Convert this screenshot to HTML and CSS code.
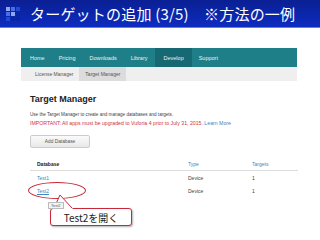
FILE: index.html
```html
<!DOCTYPE html>
<html lang="ja">
<head>
  <meta charset="UTF-8">
  <title>ターゲットの追加</title>
  <link rel="stylesheet" href="styles.css">
</head>
<body>
  <header class="slide-title">
    <div class="grid-icon">
      <span class="c1"></span><span class="c2"></span><span class="c3"></span>
      <span class="c2"></span><span class="c1"></span><span class="c4"></span>
      <span class="c3"></span><span class="c4"></span><span class="c4"></span>
    </div>
    <h1>ターゲットの追加 (3/5)　※方法の一例</h1>
  </header>

  <div class="shot">
    <nav class="topnav">
      <a>Home</a>
      <a>Pricing</a>
      <a>Downloads</a>
      <a>Library</a>
      <a class="active">Develop</a>
      <a>Support</a>
    </nav>
    <nav class="subnav">
      <a>License Manager</a>
      <a class="active">Target Manager</a>
    </nav>

    <div class="content">
      <h2>Target Manager</h2>
      <p class="desc">Use the Target Manager to create and manage databases and targets.</p>
      <p class="warn">IMPORTANT: All apps must be upgraded to Vuforia 4 prior to July 31, 2015. <a>Learn More</a></p>
      <button class="add-db">Add Database</button>

      <div class="table">
        <div class="row head">
          <span class="c-name">Database</span>
          <span class="c-type">Type</span>
          <span class="c-count">Targets</span>
        </div>
        <div class="row">
          <span class="c-name"><a>Test1</a></span>
          <span class="c-type">Device</span>
          <span class="c-count">1</span>
        </div>
        <div class="row">
          <span class="c-name"><a class="underline">Test2</a></span>
          <span class="c-type">Device</span>
          <span class="c-count">1</span>
        </div>
      </div>
    </div>

    <div class="ring"></div>
    <div class="callout">Test2を開く</div>
    <svg class="pointer" width="40" height="20" viewBox="0 0 40 20">
      <polygon points="20,5 14,19 33,19" fill="#fff"/>
      <polyline points="14,18 20,5 32,18" fill="none" stroke="#c8283a" stroke-width="1"/>
    </svg>
    <div class="tip">Test2</div>
  </div>
</body>
</html>
```

FILE: styles.css
```css
* {
  margin: 0;
  padding: 0;
  box-sizing: border-box;
}
body {
  width: 320px;
  height: 240px;
  overflow: hidden;
  background: #fff;
  font-family: 'Liberation Sans', Arial, sans-serif;
  color: #333;
}
.slide-title {
  height: 28px;
  display: flex;
  align-items: center;
  gap: 10px;
  padding-left: 6px;
  background: linear-gradient(to bottom, #0a1f93, #0d2cc0);
  border-bottom: 1px solid #6a7fd6;
}
.grid-icon {
  display: grid;
  grid-template-columns: repeat(3, 4px);
  gap: 1px;
}
.grid-icon span {
  width: 4px;
  height: 4px;
}
.grid-icon .c1 { background: #8fa6f0; }
.grid-icon .c2 { background: #4a6ee8; }
.grid-icon .c3 { background: #2048d8; }
.grid-icon .c4 { background: #0a25a0; }
.slide-title h1 {
  color: #fff;
  font-family: 'Noto Sans CJK JP', sans-serif;
  font-weight: 400;
  font-size: 15px;
  letter-spacing: 0.2px;
}
.shot {
  position: relative;
  height: 211px;
  padding: 20px 23px 0 21px;
  font-size: 5.5px;
}
.topnav {
  display: flex;
  height: 19px;
  align-items: stretch;
  background: #1f7f88;
  padding-left: 2px;
}
.topnav a {
  color: #e8f2f3;
  display: flex;
  align-items: center;
  padding: 0 7px;
}
.topnav a.active {
  background: #166972;
  padding: 0 8px 0 9px;
}
.subnav {
  display: flex;
  height: 14px;
  background: #efefef;
  padding-left: 8px;
  font-size: 5px;
}
.subnav a {
  display: flex;
  align-items: center;
  padding: 0 6px;
  color: #555;
}
.subnav a.active {
  background: #dcdcdc;
}
.content {
  padding: 13px 0 0 9px;
}
h2 {
  font-size: 9px;
  font-weight: 700;
  color: #222;
  margin-bottom: 7px;
}
.desc,
.warn {
  font-size: 4.6px;
  line-height: 8px;
}
.desc {
  color: #444;
}
.warn {
  font-size: 5.2px;
  color: #d2343c;
}
.warn a {
  color: #3a87c4;
}
.add-db {
  margin-top: 8px;
  width: 60px;
  height: 13px;
  font-family: inherit;
  font-size: 4.8px;
  color: #555;
  background: linear-gradient(#fafafa, #e8e8e8);
  border: 1px solid #ccc;
  border-radius: 2px;
}
.table {
  margin-top: 10px;
  width: 268px;
  font-size: 5px;
}
.row {
  display: flex;
  height: 13px;
  align-items: center;
  padding-left: 7px;
}
.row.head {
  border-bottom: 1px solid #ddd;
  font-weight: 700;
  color: #222;
}
.row.head .c-type,
.row.head .c-count {
  color: #3a87c4;
  font-weight: 400;
}
.c-name { width: 151px; }
.c-type { width: 64px; color: #444; }
.c-count { color: #444; }
.c-name a {
  color: #3a87c4;
}
.c-name a.underline {
  text-decoration: underline;
}
.ring {
  position: absolute;
  left: 28px;
  top: 154px;
  width: 58px;
  height: 17px;
  border: 1.2px solid #c8283a;
  border-radius: 50%;
}
.tip {
  position: absolute;
  left: 48px;
  top: 174px;
  font-size: 4px;
  padding: 0 2px;
  background: #f4f4f4;
  border: 1px solid #bbb;
  color: #555;
}
.pointer {
  position: absolute;
  left: 40px;
  top: 162px;
}
.callout {
  position: absolute;
  left: 50px;
  top: 180px;
  width: 82px;
  height: 18px;
  display: flex;
  align-items: center;
  justify-content: center;
  background: #fff;
  border: 1px solid #c8283a;
  border-radius: 3px;
  box-shadow: 1px 1px 2px rgba(0,0,0,0.3);
  font-family: 'Noto Sans CJK JP', sans-serif;
  font-size: 10px;
  color: #222;
}
```
